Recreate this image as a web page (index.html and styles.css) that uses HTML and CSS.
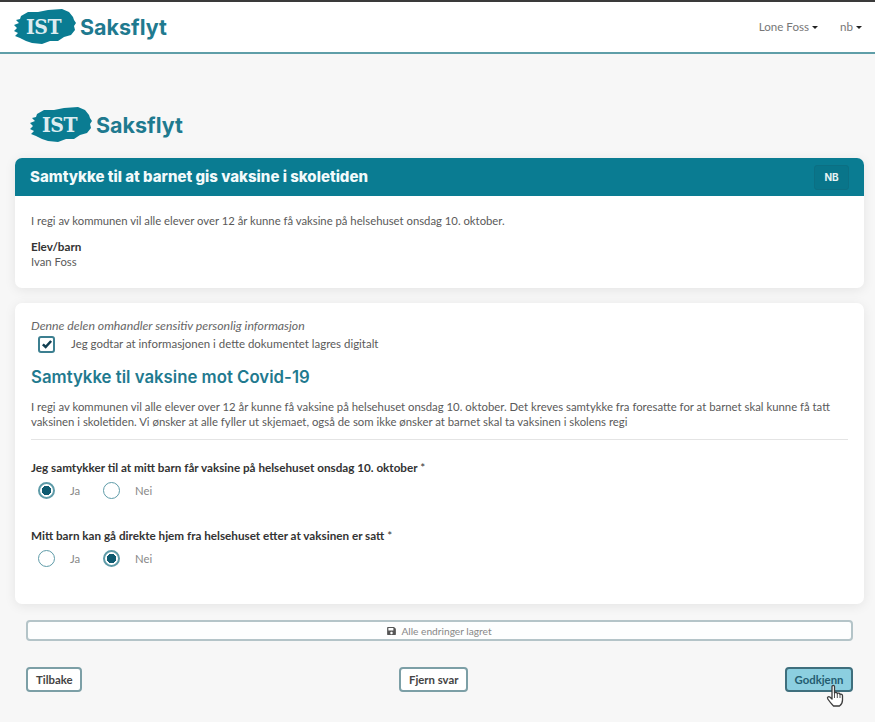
FILE: index.html
```html
<!DOCTYPE html>
<html lang="nb">
<head>
  <meta charset="UTF-8" />
  <title>Saksflyt</title>
  <link rel="stylesheet" href="styles.css">
</head>
<body>

  <header class="topbar">
    <a class="logo" href="#">
      <span class="logo-mark">
        <svg viewBox="0 0 62 36" width="62" height="36">
          <path fill="#0a7c92" d="M7 7 L14 3 L24 3 L34 1 L48 0 L55 3 L59 8 L60 11 L62 14 L60 17 L61 21 L57 26 L50 28 L44 32 L36 32 L28 35 L18 34 L12 32 L6 29 L1 27 L4 24 L0 22 L3 19 L0 16 L5 14 L2 11 L6 10 Z"/>
        </svg>
        <span class="logo-ist">IST</span>
      </span>
      <span class="logo-name">Saksflyt</span>
    </a>
    <nav class="topnav">
      <a href="#" class="dropdown">Lone Foss</a>
      <a href="#" class="dropdown">nb</a>
    </nav>
  </header>

  <main class="page">
    <div class="page-logo">
      <span class="logo">
        <span class="logo-mark">
          <svg viewBox="0 0 62 36" width="62" height="36">
            <path fill="#0a7c92" d="M7 7 L14 3 L24 3 L34 1 L48 0 L55 3 L59 8 L60 11 L62 14 L60 17 L61 21 L57 26 L50 28 L44 32 L36 32 L28 35 L18 34 L12 32 L6 29 L1 27 L4 24 L0 22 L3 19 L0 16 L5 14 L2 11 L6 10 Z"/>
          </svg>
          <span class="logo-ist">IST</span>
        </span>
        <span class="logo-name">Saksflyt</span>
      </span>
    </div>

    <section class="card">
      <div class="card-head">
        <h1>Samtykke til at barnet gis vaksine i skoletiden</h1>
        <span class="lang-badge">NB</span>
      </div>
      <div class="card-body intro">
        <p>I regi av kommunen vil alle elever over 12 år kunne få vaksine på helsehuset onsdag 10. oktober.</p>
        <div class="student-label">Elev/barn</div>
        <div>Ivan Foss</div>
      </div>
    </section>

    <section class="card">
      <div class="card-body form">
        <div class="sensitive">Denne delen omhandler sensitiv personlig informasjon</div>
        <label class="consent">
          <span class="checkbox">
            <svg viewBox="0 0 16 16" width="12" height="12"><path d="M2.500 8.500 L6.200 12 L13.500 4" fill="none" stroke="#123f52" stroke-width="3.400"/></svg>
          </span>
          Jeg godtar at informasjonen i dette dokumentet lagres digitalt
        </label>
        <h2>Samtykke til vaksine mot Covid-19</h2>
        <p class="lead">I regi av kommunen vil alle elever over 12 år kunne få vaksine på helsehuset onsdag 10. oktober. Det kreves samtykke fra foresatte for at barnet skal kunne få tatt vaksinen i skoletiden. Vi ønsker at alle fyller ut skjemaet, også de som ikke ønsker at barnet skal ta vaksinen i skolens regi</p>
        <hr />

        <div class="question">
          <div class="question-title">Jeg samtykker til at mitt barn får vaksine på helsehuset onsdag 10. oktober <span class="req">*</span></div>
          <div class="options">
            <span class="option"><span class="radio checked"></span>Ja</span>
            <span class="option"><span class="radio"></span>Nei</span>
          </div>
        </div>

        <div class="question">
          <div class="question-title">Mitt barn kan gå direkte hjem fra helsehuset etter at vaksinen er satt <span class="req">*</span></div>
          <div class="options">
            <span class="option"><span class="radio"></span>Ja</span>
            <span class="option"><span class="radio checked"></span>Nei</span>
          </div>
        </div>
      </div>
    </section>

    <div class="save-status">
      <svg viewBox="0 0 448 512" width="9" height="10"><path fill="#555" d="M433.900 130 352 48H48C21.500 48 0 69.500 0 96v320c0 26.500 21.500 48 48 48h352c26.500 0 48-21.500 48-48V164c0-12.700-5.100-24.900-14.100-34zM224 416c-35.300 0-64-28.700-64-64s28.700-64 64-64 64 28.700 64 64-28.700 64-64 64zm96-304.500V212c0 6.600-5.400 12-12 12H76c-6.600 0-12-5.400-12-12V108c0-6.600 5.400-12 12-12h228.500c3.200 0 6.200 1.300 8.500 3.500l3.500 3.500c2.200 2.300 3.500 5.300 3.500 8.500z"/></svg>
      Alle endringer lagret
    </div>

    <div class="actions">
      <button class="btn">Tilbake</button>
      <button class="btn">Fjern svar</button>
      <span class="approve-wrap">
        <button class="btn btn-approve">Godkjenn</button>
        <svg class="hand" viewBox="0 0 18 24" width="18" height="24">
          <path fill="#fff" stroke="#3d3d3d" stroke-width="1.300" stroke-linejoin="round" d="M6 2.500 C6 1 8.500 1 8.500 2.500 L8.500 9 C9.500 8 11 8.300 11.300 9.500 C12.300 8.700 13.700 9.200 14 10.300 C15 9.800 16.500 10.300 16.500 11.800 L16.500 16 C16.500 19 15 21 13.500 22 L7.500 22 C6 20.500 3.500 17.500 1.800 15 C0.800 13.500 2.500 12 3.800 13 L6 15 Z"/>
          <path fill="none" stroke="#3d3d3d" stroke-width="0.900" d="M8.500 9 V14 M11.300 9.500 V14 M14 10.300 V14"/>
        </svg>
      </span>
    </div>
  </main>

</body>
</html>
```

FILE: styles.css
```css
* {
  box-sizing: border-box;
}

body {
  margin: 0;
  font-family: 'Lato', sans-serif;
  font-size: 11.300px;
  line-height: 16px;
  color: #5a5a5a;
  background: #f7f7f7;
  height: 722px;
  overflow: hidden;
}

.topbar {
  height: 54px;
  display: flex;
  align-items: center;
  justify-content: space-between;
  background: #fff;
  border-top: 2px solid #3a3a3a;
  border-bottom: 2px solid #5f9ea8;
  padding: 0 13px 0 14px;
}

.logo {
  display: flex;
  align-items: center;
  gap: 4px;
  text-decoration: none;
}

.logo-mark {
  position: relative;
  display: block;
  width: 62px;
  height: 36px;
}

.logo-mark svg {
  display: block;
}

.logo-ist {
  position: absolute;
  top: 6px;
  left: 12px;
  font-family: 'DejaVu Serif', serif;
  font-stretch: condensed;
  font-weight: bold;
  font-size: 21px;
  line-height: 24px;
  letter-spacing: -0.5px;
  color: #dcecf0;
}

.logo-name {
  font-family: 'Inter', sans-serif;
  font-weight: 700;
  font-size: 21.500px;
  color: #1f7a8f;
}

.topnav {
  display: flex;
  gap: 22px;
}

.dropdown {
  color: #777;
  font-size: 11.600px;
  text-decoration: none;
}

.dropdown::after {
  content: "";
  display: inline-block;
  margin-left: 3px;
  vertical-align: 2px;
  border-top: 3px solid #222;
  border-left: 3px solid transparent;
  border-right: 3px solid transparent;
}

.page {
  padding: 53px 11px 0 15px;
}

.page-logo {
  padding: 0 0 15px 15px;
}

.card {
  background: #fff;
  border-radius: 7px;
  box-shadow: 0 2px 12px rgba(0,0,0,0.08);
  margin-bottom: 15px;
}

.card-head {
  height: 38px;
  display: flex;
  align-items: center;
  justify-content: space-between;
  background: #0a7c92;
  border-radius: 7px 7px 0 0;
  padding: 0 15px;
}

.card-head h1 {
  margin: 0;
  font-family: 'Inter', sans-serif;
  font-size: 15px;
  font-weight: 800;
  color: #f2fafb;
}

.lang-badge {
  width: 35px;
  height: 25px;
  display: flex;
  align-items: center;
  justify-content: center;
  background: #09758a;
  border: 1px solid #0c6f83;
  border-radius: 3px;
  font-family: 'Inter', sans-serif;
  font-size: 10px;
  font-weight: 700;
  color: #e6f3f5;
}

.card-body {
  padding: 0 16px;
}

.intro {
  height: 92px;
  padding-top: 17px;
}

.intro p {
  margin: 0 0 9px;
}

.student-label {
  font-size: 11.700px;
  font-weight: 700;
  color: #333;
}

.form {
  height: 301px;
  padding-top: 15px;
}

.sensitive {
  font-style: italic;
  font-size: 12.300px;
  color: #666;
}

.consent {
  display: flex;
  align-items: center;
  padding-left: 7px;
  height: 20px;
  font-size: 11.450px;
}

.checkbox {
  width: 17px;
  height: 17px;
  display: flex;
  align-items: center;
  justify-content: center;
  margin-right: 16px;
  background: #fff;
  border: 2px solid #3c7f90;
  border-radius: 3px;
}

.form h2 {
  margin: 12px 0 11px;
  font-family: 'Inter', sans-serif;
  font-size: 16.800px;
  line-height: 22px;
  font-weight: 600;
  color: #1f7a8f;
}

.lead {
  margin: 0;
  line-height: 15px;
  font-size: 11.350px;
}

hr {
  border: 0;
  border-top: 1px solid #e4e4e4;
  margin: 10px 0 19px;
}

.question {
  margin-bottom: 28px;
}

.question-title {
  font-size: 11.700px;
  font-weight: 700;
  color: #333;
  margin-bottom: 7px;
}

.req {
  font-weight: 400;
}

.options {
  display: flex;
  padding-left: 7px;
  gap: 15px;
}

.option {
  display: flex;
  align-items: center;
  width: 50px;
  gap: 15px;
  color: #888;
}

.radio {
  flex: none;
  width: 17px;
  height: 17px;
  background: #fff;
  border: 1.500px solid #5e9ba8;
  border-radius: 50%;
}

.radio.checked {
  border: 2px solid #5e9ba8;
  background: radial-gradient(circle, #0e5a70 0 4.500px, #fff 5px);
}

.save-status {
  height: 21px;
  margin: 16px 11px 0 11px;
  display: flex;
  align-items: center;
  justify-content: center;
  gap: 5px;
  background: #fdfefe;
  border: 2px solid #b4c4c8;
  border-radius: 4px;
  font-size: 10.200px;
  color: #888;
}

.actions {
  display: flex;
  justify-content: space-between;
  margin: 26px 11px 0 11px;
}

.btn {
  height: 25px;
  padding: 0 8px;
  background: #fff;
  border: 2px solid #7c9fa6;
  border-radius: 4px;
  font-family: 'Lato', sans-serif;
  font-size: 11.350px;
  font-weight: 700;
  color: #444;
}

.approve-wrap {
  position: relative;
  display: block;
}

.btn-approve {
  background: #8ccfe0;
  border-color: #3f6f7d;
  color: #245d70;
  width: 68px;
  padding: 0;
}

.hand {
  position: absolute;
  left: 41px;
  top: 17px;
}
```
